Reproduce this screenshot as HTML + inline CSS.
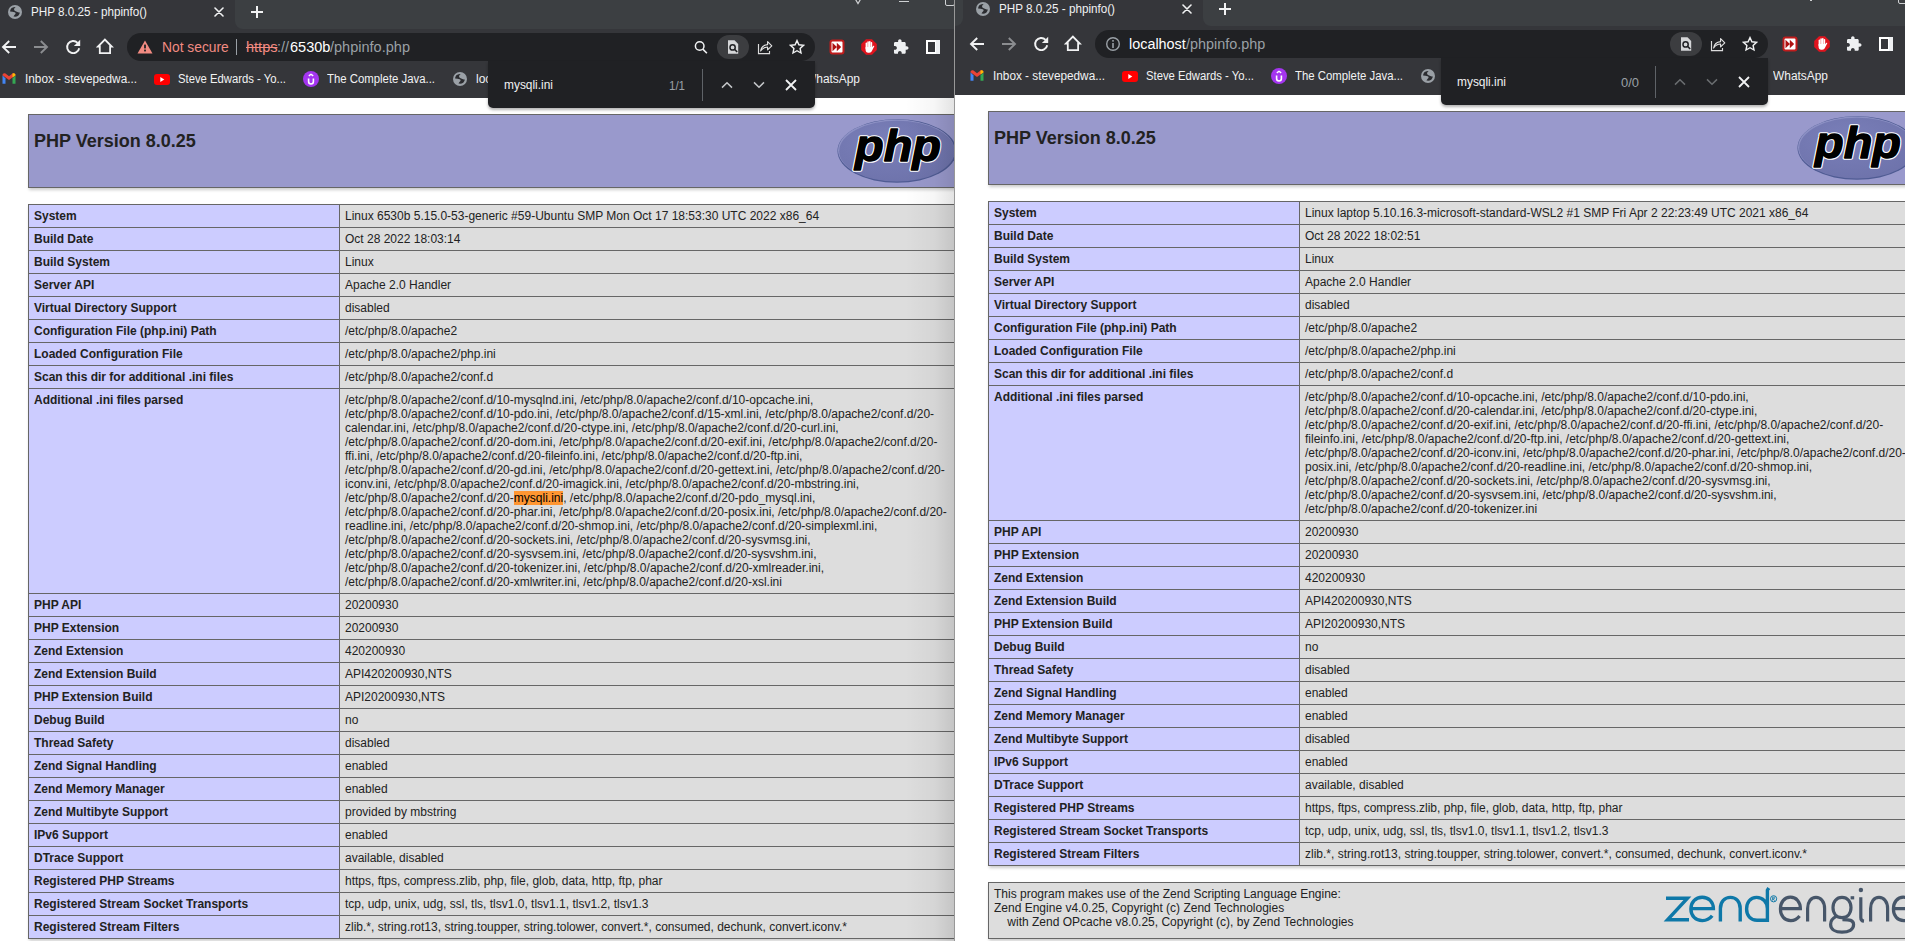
<!DOCTYPE html>
<html><head><meta charset="utf-8"><title>phpinfo</title><style>
*{box-sizing:content-box}
html,body{margin:0;padding:0;width:1905px;height:941px;overflow:hidden;background:#fff;font-family:"Liberation Sans",sans-serif}
.win{position:absolute;top:0;height:941px;overflow:hidden;background:#35363a}
.abs{position:absolute}
.strip{position:absolute;left:0;right:0;top:0;background:#3c3f42}
.tab{position:absolute;background:#35363a}
.toolbar{position:absolute;left:0;right:0;background:#35363a}
.omni{position:absolute;height:28px;border-radius:14px;background:#202124}
.txt{position:absolute;white-space:nowrap;color:#e8eaed;line-height:1}
.page{position:absolute;left:0;right:0;bottom:0;background:#fff;overflow:hidden;color:#222}
.center{padding-top:16px}
table.pi{border-collapse:collapse;border:0;width:934px;box-shadow:1px 2px 3px #ccc;margin:0 0 16px 0}
.pi td{border:1px solid #666;font-size:12px;line-height:14px;vertical-align:baseline;padding:4px 5px;white-space:nowrap}
.pi .e{background:#ccf;width:300px;font-weight:bold}
.pi .v{background:#ddd}
.pi tr.h td{background:#99c;font-weight:bold}
.pi h1{font-size:18px;margin:12px 0;line-height:21px}
.phplogo{float:right}
.hl{background:#ff9632;font-weight:normal;color:#000}
.findbar{position:absolute;width:327px;height:47px;background:#202124;border-radius:0 0 5px 5px;box-shadow:0 2px 3px rgba(0,0,0,.3)}
.zcell{height:47px}
.zlogo{float:right;width:260px;height:47px}
</style></head>
<body>
<div class="win" style="left:0px;width:954px"><div class="abs" style="left:0;top:0;width:954px;height:29px;background:#3c3f42"></div>
<div class="abs" style="left:-5px;top:0;width:240px;height:29px;background:#35363a;border-radius:0 0 0 0"></div>
<div class="abs" style="left:235px;top:21px;width:8px;height:8px;background:#35363a"><div style="width:8px;height:8px;background:#3c3f42;border-bottom-left-radius:8px"></div></div>
<div class="abs" style="left:235px;top:0px;width:8px;height:21px;background:#3c3f42"></div>
<div class="abs" style="left:0;top:29px;width:954px;height:69px;background:#35363a"></div>
<svg class="abs" style="left:7px;top:4px;" width="16" height="16" viewBox="0 0 16 16"><circle cx="8" cy="8" r="7" fill="#9aa0a6"/><path d="M3.1 7.6C3.2 5.8 4 4.4 5.2 3.8C6.2 3.3 7.4 3 8.6 3.1C7.6 4 7 4.8 7.1 5.7C7.3 6.8 8.6 7.2 10.4 7.9C11.4 8.3 12.2 8.4 12.8 8.6C12.6 10 12 11 11.2 11.8C10 12.6 8.2 12.8 6.5 12.5C6.8 11.6 7.6 10.8 8.4 10C8.8 9.4 8.6 8.6 7.6 8.2C6.4 7.8 4.8 7.6 3.1 7.6Z" fill="#2b2c30"/></svg>
<div class="txt" style="left:31px;top:5.84px;font-size:12px;height:12px;color:#f1f2f3;transform:scaleX(0.9733);transform-origin:0 0;">PHP 8.0.25 - phpinfo()</div>
<svg class="abs" style="left:214px;top:7px;" width="10" height="10" viewBox="0 0 10 10"><path d="M1 1L9 9M9 1L1 9" stroke="#f1f2f3" stroke-width="1.6" stroke-linecap="round"/></svg>
<svg class="abs" style="left:250px;top:5px;" width="14" height="14" viewBox="0 0 14 14"><path d="M7 1V13M1 7H13" stroke="#f1f2f3" stroke-width="2"/></svg>
<svg class="abs" style="left:852px;top:-5px;" width="14" height="10" viewBox="0 0 14 10"><path d="M1.5 1L6 8.6L10.5 1" stroke="#cfd1d3" stroke-width="1.2" fill="none"/></svg>
<div class="abs" style="left:899px;top:1px;width:10px;height:1px;background:#cfd1d3"></div>
<div class="abs" style="left:945px;top:-5px;width:8px;height:9px;border:1px solid #cfd1d3;border-radius:2px"></div>
<svg class="abs" style="left:1px;top:39px;" width="16" height="16" viewBox="0 0 16 16"><path d="M15 8H2.5M8.2 2L2 8L8.2 14" stroke="#f1f2f3" stroke-width="1.9" fill="none"/></svg>
<svg class="abs" style="left:33px;top:39px;" width="16" height="16" viewBox="0 0 16 16"><path d="M1 8H13.5M7.8 2L14 8L7.8 14" stroke="#8b8d90" stroke-width="1.9" fill="none"/></svg>
<svg class="abs" style="left:65px;top:39px;" width="16" height="16" viewBox="0 0 16 16"><path d="M14.2 9.2A6.1 6.1 0 1 1 12.6 3.8" stroke="#f1f2f3" stroke-width="1.9" fill="none"/><path d="M8.9 7.1H15.2V0.7Z" fill="#f1f2f3"/></svg>
<svg class="abs" style="left:96px;top:37.4px;" width="18" height="18" viewBox="0 0 18 18"><path d="M3.8 16.1V9.5H2L8.9 2.6L15.8 9.5H14.1V16.1Z" stroke="#f1f2f3" stroke-width="1.8" fill="none" stroke-linejoin="miter"/></svg>
<div class="omni" style="left:127px;top:33px;width:688px"></div>
<svg class="abs" style="left:137px;top:40px;" width="16" height="14" viewBox="0 0 16 14"><path d="M8 0.5L15.5 13.5H0.5Z" fill="#f28b82"/><rect x="7.1" y="4.6" width="1.8" height="3.8" fill="#202124"/><rect x="7.1" y="9.6" width="1.8" height="1.8" fill="#202124"/></svg>
<div class="txt" style="left:161.5px;top:40.15px;font-size:14px;height:14px;color:#f28b82;transform:scaleX(0.9867);transform-origin:0 0;">Not secure</div>
<div class="abs" style="left:236px;top:39px;width:1px;height:16px;background:#9aa0a6"></div>
<div class="txt" style="left:246px;top:40.15px;font-size:14px;height:14px;color:#f28b82;transform:scaleX(1.0378);transform-origin:0 0;text-decoration:line-through;">https</div>
<div class="txt" style="left:277.49982350131853px;top:40.15px;font-size:14px;height:14px;color:#9aa0a6;transform:scaleX(1.0378);transform-origin:0 0;">://</div>
<div class="txt" style="left:289.6093772711227px;top:40.15px;font-size:14px;height:14px;color:#fff;transform:scaleX(1.0378);transform-origin:0 0;">6530b</div>
<div class="txt" style="left:330.0142860109221px;top:40.15px;font-size:14px;height:14px;color:#9aa0a6;transform:scaleX(1.0378);transform-origin:0 0;">/phpinfo.php</div>
<svg class="abs" style="left:692px;top:39px;" width="16" height="16" viewBox="0 0 16 16"><circle cx="7.7" cy="7" r="4.3" stroke="#f1f2f3" stroke-width="1.5" fill="none"/><path d="M10.8 10.1L14.9 14.2" stroke="#f1f2f3" stroke-width="1.6"/></svg>
<div class="abs" style="left:717px;top:35px;width:32px;height:24px;border-radius:12px;background:#3c3d40"></div>
<svg class="abs" style="left:725px;top:39px;" width="16" height="16" viewBox="0 0 16 16"><path d="M3 1.2H9.5L13.2 4.9V14.8H3Z" fill="#d5d6d8"/><circle cx="7.6" cy="8.4" r="2.6" stroke="#202124" stroke-width="1.5" fill="none"/><path d="M9.5 10.3L12.2 13" stroke="#202124" stroke-width="1.6"/></svg>
<svg class="abs" style="left:757px;top:39px;" width="16" height="16" viewBox="0 0 16 16"><path d="M1.5 5V14.6H12.5V12" stroke="#dcdcdc" stroke-width="1.15" fill="none"/><path d="M3.6 12C4.2 8.4 6.6 6 10.6 5.6V2.6L14.8 6.8L10.6 10.8V8C7.6 8 5.4 9.4 3.6 12Z" stroke="#e6e6e6" stroke-width="1.1" fill="none" stroke-linejoin="round"/></svg>
<svg class="abs" style="left:789px;top:39px;" width="16" height="16" viewBox="0 0 16 16"><path d="M8 1.6L9.9 5.8L14.5 6.3L11.1 9.4L12 14L8 11.7L4 14L4.9 9.4L1.5 6.3L6.1 5.8Z" stroke="#f1f2f3" stroke-width="1.4" fill="none" stroke-linejoin="miter"/></svg>
<svg class="abs" style="left:829px;top:39px;" width="16" height="16" viewBox="0 0 16 16"><rect x="1.5" y="1.5" width="13" height="13" rx="2" fill="#fff" stroke="#c01c1c" stroke-width="2"/><path d="M3.5 3.7L7.9 8L3.5 12.3Z M7.8 3.7L12.2 8L7.8 12.3Z" fill="#b01212"/></svg>
<svg class="abs" style="left:861px;top:39px;" width="16" height="16" viewBox="0 0 16 16"><path d="M5 0.2H11L15.8 5V11L11 15.8H5L0.2 11V5Z" fill="#e0141e"/><g fill="#fff"><rect x="4.6" y="3.6" width="1.6" height="7" rx="0.8"/><rect x="6.3" y="2.2" width="1.6" height="8" rx="0.8"/><rect x="8" y="2" width="1.6" height="8" rx="0.8"/><rect x="9.7" y="3" width="1.5" height="7" rx="0.75"/><path d="M4.6 8H11.2L12.4 6.8C12.9 6.4 13.5 6.8 13.2 7.4L11 11.8C10.5 13 9.6 13.8 8.2 13.8H7.2C5.6 13.8 4.6 12.6 4.6 11Z"/></g></svg>
<svg class="abs" style="left:893px;top:39px;" width="16" height="16" viewBox="0 0 16 16"><path transform="translate(-0.4 -0.4) scale(0.69)" d="M20.5 11H19V7c0-1.1-.9-2-2-2h-4V3.5C13 2.12 11.88 1 10.5 1S8 2.12 8 3.5V5H4c-1.1 0-1.99.9-1.99 2v3.8H3.5c1.49 0 2.7 1.21 2.7 2.7s-1.21 2.7-2.7 2.7H2V20c0 1.1.9 2 2 2h3.8v-1.5c0-1.49 1.21-2.7 2.7-2.7 1.49 0 2.7 1.21 2.7 2.7V22H17c1.1 0 2-.9 2-2v-4h1.5c1.38 0 2.5-1.12 2.5-2.5S21.88 11 20.5 11z" fill="#eef0f2"/></svg>
<svg class="abs" style="left:925px;top:39px;" width="16" height="16" viewBox="0 0 16 16"><rect x="1" y="1" width="14" height="14" fill="#fff"/><rect x="3" y="3" width="7" height="10" fill="#35363a"/><rect x="11" y="1" width="4" height="14" fill="#eef0f2"/></svg>
<svg class="abs" style="left:1px;top:72px;" width="16" height="13" viewBox="0 0 16 13"><path d="M1.5 3.2V11.8H4.5V6.6Z" fill="#4285f4"/><path d="M11.5 6.6V11.8H14.5V3.2Z" fill="#34a853"/><path d="M1.5 3.2L8 8L14.5 3.2C14.5 1.4 12.8 0.6 11.5 1.6L8 4.2L4.5 1.6C3.2 0.6 1.5 1.4 1.5 3.2Z" fill="#ea4335"/><path d="M11.5 1.6C12.8 0.6 14.5 1.4 14.5 3.2L11.5 5.4Z" fill="#fbbc04"/></svg>
<div class="txt" style="left:25px;top:72.84px;font-size:12px;height:12px;color:#f1f2f3;transform:scaleX(0.9819);transform-origin:0 0;">Inbox - stevepedwa...</div>
<div class="abs" style="left:154px;top:73.5px;width:16px;height:11px;border-radius:3px;background:#f00"></div>
<svg class="abs" style="left:154px;top:73.5px;" width="16" height="11" viewBox="0 0 16 11"><path d="M6.3 3V8L10.3 5.5Z" fill="#fff"/></svg>
<div class="txt" style="left:178px;top:72.84px;font-size:12px;height:12px;color:#f1f2f3;transform:scaleX(0.9413);transform-origin:0 0;">Steve Edwards - Yo...</div>
<svg class="abs" style="left:303px;top:71px;" width="16" height="16" viewBox="0 0 16 16"><circle cx="8" cy="8" r="8" fill="#a435f0"/><path d="M5.6 7.6V10.6A2.4 2.4 0 0 0 10.4 10.6V7.6" stroke="#fff" stroke-width="1.6" fill="none"/><path d="M5.8 4.9L8 3.3L10.2 4.9" stroke="#fff" stroke-width="1.4" fill="none"/></svg>
<div class="txt" style="left:327px;top:72.84px;font-size:12px;height:12px;color:#f1f2f3;transform:scaleX(0.9469);transform-origin:0 0;">The Complete Java...</div>
<svg class="abs" style="left:452px;top:71px;" width="16" height="16" viewBox="0 0 16 16"><circle cx="8" cy="8" r="7" fill="#9aa0a6"/><path d="M3.1 7.6C3.2 5.8 4 4.4 5.2 3.8C6.2 3.3 7.4 3 8.6 3.1C7.6 4 7 4.8 7.1 5.7C7.3 6.8 8.6 7.2 10.4 7.9C11.4 8.3 12.2 8.4 12.8 8.6C12.6 10 12 11 11.2 11.8C10 12.6 8.2 12.8 6.5 12.5C6.8 11.6 7.6 10.8 8.4 10C8.8 9.4 8.6 8.6 7.6 8.2C6.4 7.8 4.8 7.6 3.1 7.6Z" fill="#2b2c30"/></svg>
<div class="txt" style="left:476px;top:72.84px;font-size:12px;height:12px;color:#f1f2f3;">localhost</div>
<div class="txt" style="left:804.5px;top:72.84px;font-size:12px;height:12px;color:#f1f2f3;transform:scaleX(0.9935);transform-origin:0 0;">WhatsApp</div><div class="page" style="top:98px"><div class="center" style="padding-left:28px">
<table class="pi"><tr class="h"><td><svg class="phplogo" width="120" height="64" viewBox="0 0 120 64">
<defs><radialGradient id="pg" cx="0.4" cy="0.35" r="0.75"><stop offset="0" stop-color="#7a7fb9"/><stop offset="1" stop-color="#6d72aa"/></radialGradient></defs>
<ellipse cx="60" cy="32" rx="59.5" ry="31.8" fill="#4f5b93"/>
<ellipse cx="59.2" cy="31.2" rx="58.2" ry="30.6" fill="#8c90c4"/>
<ellipse cx="60" cy="32.2" rx="57.8" ry="30.4" fill="url(#pg)"/>
<text x="18" y="41.5" font-family="Liberation Sans" font-weight="bold" font-style="italic" font-size="45" fill="#000" stroke="#fff" stroke-width="3.6" stroke-linejoin="round" paint-order="stroke" textLength="86" lengthAdjust="spacingAndGlyphs">php</text>
<text x="18" y="41.5" font-family="Liberation Sans" font-weight="bold" font-style="italic" font-size="45" fill="#000" stroke="#000" stroke-width="1.3" stroke-linejoin="round" textLength="86" lengthAdjust="spacingAndGlyphs">php</text>
</svg><h1 class="p">PHP Version 8.0.25</h1></td></tr></table>
<table class="pi">
<tr><td class="e">System</td><td class="v">Linux 6530b 5.15.0-53-generic #59-Ubuntu SMP Mon Oct 17 18:53:30 UTC 2022 x86_64</td></tr>
<tr><td class="e">Build Date</td><td class="v">Oct 28 2022 18:03:14</td></tr>
<tr><td class="e">Build System</td><td class="v">Linux</td></tr>
<tr><td class="e">Server API</td><td class="v">Apache 2.0 Handler</td></tr>
<tr><td class="e">Virtual Directory Support</td><td class="v">disabled</td></tr>
<tr><td class="e">Configuration File (php.ini) Path</td><td class="v">/etc/php/8.0/apache2</td></tr>
<tr><td class="e">Loaded Configuration File</td><td class="v">/etc/php/8.0/apache2/php.ini</td></tr>
<tr><td class="e">Scan this dir for additional .ini files</td><td class="v">/etc/php/8.0/apache2/conf.d</td></tr>
<tr><td class="e">Additional .ini files parsed</td><td class="v">/etc/php/8.0/apache2/conf.d/10-mysqlnd.ini, /etc/php/8.0/apache2/conf.d/10-opcache.ini,<br>/etc/php/8.0/apache2/conf.d/10-pdo.ini, /etc/php/8.0/apache2/conf.d/15-xml.ini, /etc/php/8.0/apache2/conf.d/20-<br>calendar.ini, /etc/php/8.0/apache2/conf.d/20-ctype.ini, /etc/php/8.0/apache2/conf.d/20-curl.ini,<br>/etc/php/8.0/apache2/conf.d/20-dom.ini, /etc/php/8.0/apache2/conf.d/20-exif.ini, /etc/php/8.0/apache2/conf.d/20-<br>ffi.ini, /etc/php/8.0/apache2/conf.d/20-fileinfo.ini, /etc/php/8.0/apache2/conf.d/20-ftp.ini,<br>/etc/php/8.0/apache2/conf.d/20-gd.ini, /etc/php/8.0/apache2/conf.d/20-gettext.ini, /etc/php/8.0/apache2/conf.d/20-<br>iconv.ini, /etc/php/8.0/apache2/conf.d/20-imagick.ini, /etc/php/8.0/apache2/conf.d/20-mbstring.ini,<br>/etc/php/8.0/apache2/conf.d/20-<b class=hl>mysqli.ini</b>, /etc/php/8.0/apache2/conf.d/20-pdo_mysql.ini,<br>/etc/php/8.0/apache2/conf.d/20-phar.ini, /etc/php/8.0/apache2/conf.d/20-posix.ini, /etc/php/8.0/apache2/conf.d/20-<br>readline.ini, /etc/php/8.0/apache2/conf.d/20-shmop.ini, /etc/php/8.0/apache2/conf.d/20-simplexml.ini,<br>/etc/php/8.0/apache2/conf.d/20-sockets.ini, /etc/php/8.0/apache2/conf.d/20-sysvmsg.ini,<br>/etc/php/8.0/apache2/conf.d/20-sysvsem.ini, /etc/php/8.0/apache2/conf.d/20-sysvshm.ini,<br>/etc/php/8.0/apache2/conf.d/20-tokenizer.ini, /etc/php/8.0/apache2/conf.d/20-xmlreader.ini,<br>/etc/php/8.0/apache2/conf.d/20-xmlwriter.ini, /etc/php/8.0/apache2/conf.d/20-xsl.ini</td></tr>
<tr><td class="e">PHP API</td><td class="v">20200930</td></tr>
<tr><td class="e">PHP Extension</td><td class="v">20200930</td></tr>
<tr><td class="e">Zend Extension</td><td class="v">420200930</td></tr>
<tr><td class="e">Zend Extension Build</td><td class="v">API420200930,NTS</td></tr>
<tr><td class="e">PHP Extension Build</td><td class="v">API20200930,NTS</td></tr>
<tr><td class="e">Debug Build</td><td class="v">no</td></tr>
<tr><td class="e">Thread Safety</td><td class="v">disabled</td></tr>
<tr><td class="e">Zend Signal Handling</td><td class="v">enabled</td></tr>
<tr><td class="e">Zend Memory Manager</td><td class="v">enabled</td></tr>
<tr><td class="e">Zend Multibyte Support</td><td class="v">provided by mbstring</td></tr>
<tr><td class="e">IPv6 Support</td><td class="v">enabled</td></tr>
<tr><td class="e">DTrace Support</td><td class="v">available, disabled</td></tr>
<tr><td class="e">Registered PHP Streams</td><td class="v">https, ftps, compress.zlib, php, file, glob, data, http, ftp, phar</td></tr>
<tr><td class="e">Registered Stream Socket Transports</td><td class="v">tcp, udp, unix, udg, ssl, tls, tlsv1.0, tlsv1.1, tlsv1.2, tlsv1.3</td></tr>
<tr><td class="e">Registered Stream Filters</td><td class="v">zlib.*, string.rot13, string.toupper, string.tolower, convert.*, consumed, dechunk, convert.iconv.*</td></tr>
</table>

</div></div><div class="findbar" style="left:488px;top:61px"></div>
<div class="txt" style="left:504px;top:78.00px;font-size:13px;height:13px;color:#f1f2f3;transform:scaleX(0.9167);transform-origin:0 0;">mysqli.ini</div>
<div class="txt" style="left:669px;top:78.50px;font-size:13px;height:13px;color:#9aa0a6;transform:scaleX(0.8853);transform-origin:0 0;">1/1</div>
<div class="abs" style="left:702px;top:69px;width:1px;height:32px;background:#5f6368"></div>
<svg class="abs" style="left:719px;top:79px;" width="16" height="12" viewBox="0 0 16 12"><path d="M3 8.6L8 3.8L13 8.6" stroke="#c4c6c9" stroke-width="1.5" fill="none"/></svg>
<svg class="abs" style="left:751px;top:79px;" width="16" height="12" viewBox="0 0 16 12"><path d="M3 3.4L8 8.2L13 3.4" stroke="#c4c6c9" stroke-width="1.5" fill="none"/></svg>
<svg class="abs" style="left:783px;top:77px;" width="16" height="16" viewBox="0 0 16 16"><path d="M3 3L13 13M13 3L3 13" stroke="#f1f2f3" stroke-width="1.8"/></svg></div>
<div class="abs" style="left:905px;top:98px;width:49px;height:843px;background:linear-gradient(to right,rgba(0,0,0,0),rgba(0,0,0,0.035) 60%,rgba(0,0,0,0.11))"></div>
<div class="abs" style="left:954px;top:0;width:1px;height:941px;background:#989898"></div>
<div class="win" style="left:955px;width:950px"><div class="abs" style="left:0;top:0;width:950px;height:26px;background:#3c3f42"></div>
<div class="abs" style="left:0;top:0;width:8px;height:26px;background:#3c3f42"></div>
<div class="abs" style="left:8px;top:0;width:240px;height:26px;background:#35363a;border-radius:0 0 0 0"></div>
<div class="abs" style="left:248px;top:18px;width:8px;height:8px;background:#35363a"><div style="width:8px;height:8px;background:#3c3f42;border-bottom-left-radius:8px"></div></div>
<div class="abs" style="left:248px;top:0px;width:8px;height:18px;background:#3c3f42"></div>
<div class="abs" style="left:0px;top:18px;width:8px;height:8px;background:#35363a"><div style="width:8px;height:8px;background:#3c3f42;border-bottom-right-radius:8px"></div></div>
<div class="abs" style="left:0;top:26px;width:950px;height:69px;background:#35363a"></div>
<svg class="abs" style="left:20px;top:1px;" width="16" height="16" viewBox="0 0 16 16"><circle cx="8" cy="8" r="7" fill="#9aa0a6"/><path d="M3.1 7.6C3.2 5.8 4 4.4 5.2 3.8C6.2 3.3 7.4 3 8.6 3.1C7.6 4 7 4.8 7.1 5.7C7.3 6.8 8.6 7.2 10.4 7.9C11.4 8.3 12.2 8.4 12.8 8.6C12.6 10 12 11 11.2 11.8C10 12.6 8.2 12.8 6.5 12.5C6.8 11.6 7.6 10.8 8.4 10C8.8 9.4 8.6 8.6 7.6 8.2C6.4 7.8 4.8 7.6 3.1 7.6Z" fill="#2b2c30"/></svg>
<div class="txt" style="left:44px;top:2.84px;font-size:12px;height:12px;color:#f1f2f3;transform:scaleX(0.9733);transform-origin:0 0;">PHP 8.0.25 - phpinfo()</div>
<svg class="abs" style="left:227px;top:4px;" width="10" height="10" viewBox="0 0 10 10"><path d="M1 1L9 9M9 1L1 9" stroke="#f1f2f3" stroke-width="1.6" stroke-linecap="round"/></svg>
<svg class="abs" style="left:263px;top:2px;" width="14" height="14" viewBox="0 0 14 14"><path d="M7 1V13M1 7H13" stroke="#f1f2f3" stroke-width="2"/></svg>
<div class="abs" style="left:855px;top:0px;width:2px;height:1px;background:#cfd1d3"></div>
<div class="abs" style="left:943px;top:-6px;width:10px;height:8px;border:1px solid #cfd1d3;border-radius:2px"></div>
<svg class="abs" style="left:14px;top:36px;" width="16" height="16" viewBox="0 0 16 16"><path d="M15 8H2.5M8.2 2L2 8L8.2 14" stroke="#f1f2f3" stroke-width="1.9" fill="none"/></svg>
<svg class="abs" style="left:46px;top:36px;" width="16" height="16" viewBox="0 0 16 16"><path d="M1 8H13.5M7.8 2L14 8L7.8 14" stroke="#8b8d90" stroke-width="1.9" fill="none"/></svg>
<svg class="abs" style="left:78px;top:36px;" width="16" height="16" viewBox="0 0 16 16"><path d="M14.2 9.2A6.1 6.1 0 1 1 12.6 3.8" stroke="#f1f2f3" stroke-width="1.9" fill="none"/><path d="M8.9 7.1H15.2V0.7Z" fill="#f1f2f3"/></svg>
<svg class="abs" style="left:109px;top:34.4px;" width="18" height="18" viewBox="0 0 18 18"><path d="M3.8 16.1V9.5H2L8.9 2.6L15.8 9.5H14.1V16.1Z" stroke="#f1f2f3" stroke-width="1.8" fill="none" stroke-linejoin="miter"/></svg>
<div class="omni" style="left:140px;top:30px;width:673px"></div>
<svg class="abs" style="left:149.5px;top:36px;" width="16" height="16" viewBox="0 0 16 16"><circle cx="8" cy="8" r="6.3" stroke="#9aa0a6" stroke-width="1.4" fill="none"/><rect x="7.2" y="7" width="1.6" height="5" fill="#9aa0a6"/><rect x="7.2" y="4" width="1.6" height="1.7" fill="#9aa0a6"/></svg>
<div class="txt" style="left:174px;top:37.15px;font-size:14px;height:14px;color:#fff;transform:scaleX(1.0278);transform-origin:0 0;">localhost</div>
<div class="txt" style="left:230.7903193810752px;top:37.15px;font-size:14px;height:14px;color:#9aa0a6;transform:scaleX(1.0278);transform-origin:0 0;">/phpinfo.php</div>
<div class="abs" style="left:715px;top:32px;width:32px;height:24px;border-radius:12px;background:#3c3d40"></div>
<svg class="abs" style="left:723px;top:36px;" width="16" height="16" viewBox="0 0 16 16"><path d="M3 1.2H9.5L13.2 4.9V14.8H3Z" fill="#d5d6d8"/><circle cx="7.6" cy="8.4" r="2.6" stroke="#202124" stroke-width="1.5" fill="none"/><path d="M9.5 10.3L12.2 13" stroke="#202124" stroke-width="1.6"/></svg>
<svg class="abs" style="left:755px;top:36px;" width="16" height="16" viewBox="0 0 16 16"><path d="M1.5 5V14.6H12.5V12" stroke="#dcdcdc" stroke-width="1.15" fill="none"/><path d="M3.6 12C4.2 8.4 6.6 6 10.6 5.6V2.6L14.8 6.8L10.6 10.8V8C7.6 8 5.4 9.4 3.6 12Z" stroke="#e6e6e6" stroke-width="1.1" fill="none" stroke-linejoin="round"/></svg>
<svg class="abs" style="left:787px;top:36px;" width="16" height="16" viewBox="0 0 16 16"><path d="M8 1.6L9.9 5.8L14.5 6.3L11.1 9.4L12 14L8 11.7L4 14L4.9 9.4L1.5 6.3L6.1 5.8Z" stroke="#f1f2f3" stroke-width="1.4" fill="none" stroke-linejoin="miter"/></svg>
<svg class="abs" style="left:827px;top:36px;" width="16" height="16" viewBox="0 0 16 16"><rect x="1.5" y="1.5" width="13" height="13" rx="2" fill="#fff" stroke="#c01c1c" stroke-width="2"/><path d="M3.5 3.7L7.9 8L3.5 12.3Z M7.8 3.7L12.2 8L7.8 12.3Z" fill="#b01212"/></svg>
<svg class="abs" style="left:859px;top:36px;" width="16" height="16" viewBox="0 0 16 16"><path d="M5 0.2H11L15.8 5V11L11 15.8H5L0.2 11V5Z" fill="#e0141e"/><g fill="#fff"><rect x="4.6" y="3.6" width="1.6" height="7" rx="0.8"/><rect x="6.3" y="2.2" width="1.6" height="8" rx="0.8"/><rect x="8" y="2" width="1.6" height="8" rx="0.8"/><rect x="9.7" y="3" width="1.5" height="7" rx="0.75"/><path d="M4.6 8H11.2L12.4 6.8C12.9 6.4 13.5 6.8 13.2 7.4L11 11.8C10.5 13 9.6 13.8 8.2 13.8H7.2C5.6 13.8 4.6 12.6 4.6 11Z"/></g></svg>
<svg class="abs" style="left:891px;top:36px;" width="16" height="16" viewBox="0 0 16 16"><path transform="translate(-0.4 -0.4) scale(0.69)" d="M20.5 11H19V7c0-1.1-.9-2-2-2h-4V3.5C13 2.12 11.88 1 10.5 1S8 2.12 8 3.5V5H4c-1.1 0-1.99.9-1.99 2v3.8H3.5c1.49 0 2.7 1.21 2.7 2.7s-1.21 2.7-2.7 2.7H2V20c0 1.1.9 2 2 2h3.8v-1.5c0-1.49 1.21-2.7 2.7-2.7 1.49 0 2.7 1.21 2.7 2.7V22H17c1.1 0 2-.9 2-2v-4h1.5c1.38 0 2.5-1.12 2.5-2.5S21.88 11 20.5 11z" fill="#eef0f2"/></svg>
<svg class="abs" style="left:923px;top:36px;" width="16" height="16" viewBox="0 0 16 16"><rect x="1" y="1" width="14" height="14" fill="#fff"/><rect x="3" y="3" width="7" height="10" fill="#35363a"/><rect x="11" y="1" width="4" height="14" fill="#eef0f2"/></svg>
<svg class="abs" style="left:14px;top:69px;" width="16" height="13" viewBox="0 0 16 13"><path d="M1.5 3.2V11.8H4.5V6.6Z" fill="#4285f4"/><path d="M11.5 6.6V11.8H14.5V3.2Z" fill="#34a853"/><path d="M1.5 3.2L8 8L14.5 3.2C14.5 1.4 12.8 0.6 11.5 1.6L8 4.2L4.5 1.6C3.2 0.6 1.5 1.4 1.5 3.2Z" fill="#ea4335"/><path d="M11.5 1.6C12.8 0.6 14.5 1.4 14.5 3.2L11.5 5.4Z" fill="#fbbc04"/></svg>
<div class="txt" style="left:38px;top:69.84px;font-size:12px;height:12px;color:#f1f2f3;transform:scaleX(0.9819);transform-origin:0 0;">Inbox - stevepedwa...</div>
<div class="abs" style="left:167px;top:70.5px;width:16px;height:11px;border-radius:3px;background:#f00"></div>
<svg class="abs" style="left:167px;top:70.5px;" width="16" height="11" viewBox="0 0 16 11"><path d="M6.3 3V8L10.3 5.5Z" fill="#fff"/></svg>
<div class="txt" style="left:191px;top:69.84px;font-size:12px;height:12px;color:#f1f2f3;transform:scaleX(0.9413);transform-origin:0 0;">Steve Edwards - Yo...</div>
<svg class="abs" style="left:316px;top:68px;" width="16" height="16" viewBox="0 0 16 16"><circle cx="8" cy="8" r="8" fill="#a435f0"/><path d="M5.6 7.6V10.6A2.4 2.4 0 0 0 10.4 10.6V7.6" stroke="#fff" stroke-width="1.6" fill="none"/><path d="M5.8 4.9L8 3.3L10.2 4.9" stroke="#fff" stroke-width="1.4" fill="none"/></svg>
<div class="txt" style="left:340px;top:69.84px;font-size:12px;height:12px;color:#f1f2f3;transform:scaleX(0.9469);transform-origin:0 0;">The Complete Java...</div>
<svg class="abs" style="left:465px;top:68px;" width="16" height="16" viewBox="0 0 16 16"><circle cx="8" cy="8" r="7" fill="#9aa0a6"/><path d="M3.1 7.6C3.2 5.8 4 4.4 5.2 3.8C6.2 3.3 7.4 3 8.6 3.1C7.6 4 7 4.8 7.1 5.7C7.3 6.8 8.6 7.2 10.4 7.9C11.4 8.3 12.2 8.4 12.8 8.6C12.6 10 12 11 11.2 11.8C10 12.6 8.2 12.8 6.5 12.5C6.8 11.6 7.6 10.8 8.4 10C8.8 9.4 8.6 8.6 7.6 8.2C6.4 7.8 4.8 7.6 3.1 7.6Z" fill="#2b2c30"/></svg>
<div class="txt" style="left:489px;top:69.84px;font-size:12px;height:12px;color:#f1f2f3;">localhost</div>
<div class="txt" style="left:817.5px;top:69.84px;font-size:12px;height:12px;color:#f1f2f3;transform:scaleX(0.9935);transform-origin:0 0;">WhatsApp</div><div class="page" style="top:95px"><div class="center" style="padding-left:33px">
<table class="pi"><tr class="h"><td><svg class="phplogo" width="120" height="64" viewBox="0 0 120 64">
<defs><radialGradient id="pg" cx="0.4" cy="0.35" r="0.75"><stop offset="0" stop-color="#7a7fb9"/><stop offset="1" stop-color="#6d72aa"/></radialGradient></defs>
<ellipse cx="60" cy="32" rx="59.5" ry="31.8" fill="#4f5b93"/>
<ellipse cx="59.2" cy="31.2" rx="58.2" ry="30.6" fill="#8c90c4"/>
<ellipse cx="60" cy="32.2" rx="57.8" ry="30.4" fill="url(#pg)"/>
<text x="18" y="41.5" font-family="Liberation Sans" font-weight="bold" font-style="italic" font-size="45" fill="#000" stroke="#fff" stroke-width="3.6" stroke-linejoin="round" paint-order="stroke" textLength="86" lengthAdjust="spacingAndGlyphs">php</text>
<text x="18" y="41.5" font-family="Liberation Sans" font-weight="bold" font-style="italic" font-size="45" fill="#000" stroke="#000" stroke-width="1.3" stroke-linejoin="round" textLength="86" lengthAdjust="spacingAndGlyphs">php</text>
</svg><h1 class="p">PHP Version 8.0.25</h1></td></tr></table>
<table class="pi">
<tr><td class="e">System</td><td class="v">Linux laptop 5.10.16.3-microsoft-standard-WSL2 #1 SMP Fri Apr 2 22:23:49 UTC 2021 x86_64</td></tr>
<tr><td class="e">Build Date</td><td class="v">Oct 28 2022 18:02:51</td></tr>
<tr><td class="e">Build System</td><td class="v">Linux</td></tr>
<tr><td class="e">Server API</td><td class="v">Apache 2.0 Handler</td></tr>
<tr><td class="e">Virtual Directory Support</td><td class="v">disabled</td></tr>
<tr><td class="e">Configuration File (php.ini) Path</td><td class="v">/etc/php/8.0/apache2</td></tr>
<tr><td class="e">Loaded Configuration File</td><td class="v">/etc/php/8.0/apache2/php.ini</td></tr>
<tr><td class="e">Scan this dir for additional .ini files</td><td class="v">/etc/php/8.0/apache2/conf.d</td></tr>
<tr><td class="e">Additional .ini files parsed</td><td class="v">/etc/php/8.0/apache2/conf.d/10-opcache.ini, /etc/php/8.0/apache2/conf.d/10-pdo.ini,<br>/etc/php/8.0/apache2/conf.d/20-calendar.ini, /etc/php/8.0/apache2/conf.d/20-ctype.ini,<br>/etc/php/8.0/apache2/conf.d/20-exif.ini, /etc/php/8.0/apache2/conf.d/20-ffi.ini, /etc/php/8.0/apache2/conf.d/20-<br>fileinfo.ini, /etc/php/8.0/apache2/conf.d/20-ftp.ini, /etc/php/8.0/apache2/conf.d/20-gettext.ini,<br>/etc/php/8.0/apache2/conf.d/20-iconv.ini, /etc/php/8.0/apache2/conf.d/20-phar.ini, /etc/php/8.0/apache2/conf.d/20-<br>posix.ini, /etc/php/8.0/apache2/conf.d/20-readline.ini, /etc/php/8.0/apache2/conf.d/20-shmop.ini,<br>/etc/php/8.0/apache2/conf.d/20-sockets.ini, /etc/php/8.0/apache2/conf.d/20-sysvmsg.ini,<br>/etc/php/8.0/apache2/conf.d/20-sysvsem.ini, /etc/php/8.0/apache2/conf.d/20-sysvshm.ini,<br>/etc/php/8.0/apache2/conf.d/20-tokenizer.ini</td></tr>
<tr><td class="e">PHP API</td><td class="v">20200930</td></tr>
<tr><td class="e">PHP Extension</td><td class="v">20200930</td></tr>
<tr><td class="e">Zend Extension</td><td class="v">420200930</td></tr>
<tr><td class="e">Zend Extension Build</td><td class="v">API420200930,NTS</td></tr>
<tr><td class="e">PHP Extension Build</td><td class="v">API20200930,NTS</td></tr>
<tr><td class="e">Debug Build</td><td class="v">no</td></tr>
<tr><td class="e">Thread Safety</td><td class="v">disabled</td></tr>
<tr><td class="e">Zend Signal Handling</td><td class="v">enabled</td></tr>
<tr><td class="e">Zend Memory Manager</td><td class="v">enabled</td></tr>
<tr><td class="e">Zend Multibyte Support</td><td class="v">disabled</td></tr>
<tr><td class="e">IPv6 Support</td><td class="v">enabled</td></tr>
<tr><td class="e">DTrace Support</td><td class="v">available, disabled</td></tr>
<tr><td class="e">Registered PHP Streams</td><td class="v">https, ftps, compress.zlib, php, file, glob, data, http, ftp, phar</td></tr>
<tr><td class="e">Registered Stream Socket Transports</td><td class="v">tcp, udp, unix, udg, ssl, tls, tlsv1.0, tlsv1.1, tlsv1.2, tlsv1.3</td></tr>
<tr><td class="e">Registered Stream Filters</td><td class="v">zlib.*, string.rot13, string.toupper, string.tolower, convert.*, consumed, dechunk, convert.iconv.*</td></tr>
</table>
<table class="pi zt"><tr class="v"><td class="v zcell"><div class="zlogo"></div>This program makes use of the Zend Scripting Language Engine:<br>Zend&nbsp;Engine&nbsp;v4.0.25,&nbsp;Copyright&nbsp;(c)&nbsp;Zend&nbsp;Technologies<br>&nbsp;&nbsp;&nbsp;&nbsp;with&nbsp;Zend&nbsp;OPcache&nbsp;v8.0.25,&nbsp;Copyright&nbsp;(c),&nbsp;by&nbsp;Zend&nbsp;Technologies</td></tr></table>
</div></div><svg class="abs" style="left:695px;top:880px" width="270" height="60" viewBox="1650 880 270 60"><path d="M1666 898.2H1687.5L1667.5 919.8H1689" stroke="#0e78a8" stroke-width="3.4" fill="none" stroke-linejoin="miter"/><path d="M1691.2 908.6H1713.4C1713.4 902 1708.6 897.2 1702.2 897.2C1695.4 897.2 1690.9 902.4 1690.9 909C1690.9 915.8 1695.6 920.6 1702.4 920.6C1706.6 920.6 1709.8 918.8 1712.2 915.8" stroke="#0e78a8" stroke-width="3.4" fill="none"/><path d="M1720.4 921.5V908.4C1720.4 901.8 1724.6 897.4 1730.4 897.4C1736.2 897.4 1740.2 901.8 1740.2 908.4V921.5" stroke="#0e78a8" stroke-width="3.4" fill="none"/><path d="M1767.4 908.8C1767.4 902.2 1762.8 897.4 1756.6 897.4C1750.2 897.4 1746.6 902.6 1746.6 909C1746.6 915.6 1750.6 920.2 1757 920.2H1767.4V890.2L1768.8 888" stroke="#0e78a8" stroke-width="3.4" fill="none"/><circle cx="1773.6" cy="898.8" r="3.1" stroke="#0e78a8" stroke-width="1" fill="none"/><path d="M1772.6 900.6V897.2H1774.2C1775 897.2 1775 898.8 1774.2 898.8H1772.6L1774.8 900.6" stroke="#0e78a8" stroke-width="0.8" fill="none"/><path d="M1780.6 908.6H1800.4C1800.4 902 1796.4 897.2 1790.4 897.2C1784.2 897.2 1780.4 902.4 1780.4 909C1780.4 915.8 1784.6 920.6 1790.8 920.6C1794.6 920.6 1797.4 918.8 1799.6 916" stroke="#475669" stroke-width="3.2" fill="none"/><path d="M1807.6 921.5V908.4C1807.6 901.8 1811 897.4 1816 897.4C1821 897.4 1824.6 901.8 1824.6 908.4V921.5" stroke="#475669" stroke-width="3.2" fill="none"/><path d="M1842 897.4C1847.4 897.4 1851 901.6 1851 907.6C1851 913.6 1847.4 917.6 1842 917.6C1836.6 917.6 1833 913.6 1833 907.6C1833 901.6 1836.6 897.4 1842 897.4Z" stroke="#475669" stroke-width="3.2" fill="none"/><path d="M1850.6 897.8H1854.2" stroke="#475669" stroke-width="3.2" fill="none"/><path d="M1836.4 916.4C1832 918.4 1830.6 921 1830.6 924.4C1830.6 929.6 1835.6 932.2 1842 932.2C1848.6 932.2 1853.6 929.6 1853.6 924.6C1853.6 920 1849.6 919.6 1842.4 919.6" stroke="#475669" stroke-width="3.2" fill="none"/><path d="M1860.8 897.2V917.4C1860.8 920 1862 921 1864 921.2" stroke="#475669" stroke-width="3.2" fill="none"/><circle cx="1860.9" cy="890" r="2.2" fill="#475669"/><path d="M1870.6 921.5V908.4C1870.6 901.8 1874 897.4 1879 897.4C1884 897.4 1887.6 901.8 1887.6 908.4V921.5" stroke="#475669" stroke-width="3.2" fill="none"/><path d="M1893.6 908.6H1913.4C1913.4 902 1909.4 897.2 1903.4 897.2C1897.2 897.2 1893.4 902.4 1893.4 909C1893.4 915.8 1897.6 920.6 1903.8 920.6C1907.6 920.6 1910.4 918.8 1912.6 916" stroke="#475669" stroke-width="3.2" fill="none"/></svg><div class="findbar" style="left:486px;top:58px"></div>
<div class="txt" style="left:502px;top:75.00px;font-size:13px;height:13px;color:#f1f2f3;transform:scaleX(0.9167);transform-origin:0 0;">mysqli.ini</div>
<div class="txt" style="left:666px;top:75.50px;font-size:13px;height:13px;color:#9aa0a6;transform:scaleX(0.9960);transform-origin:0 0;">0/0</div>
<div class="abs" style="left:700px;top:66px;width:1px;height:32px;background:#5f6368"></div>
<svg class="abs" style="left:717px;top:76px;" width="16" height="12" viewBox="0 0 16 12"><path d="M3 8.6L8 3.8L13 8.6" stroke="#6a6d70" stroke-width="1.5" fill="none"/></svg>
<svg class="abs" style="left:749px;top:76px;" width="16" height="12" viewBox="0 0 16 12"><path d="M3 3.4L8 8.2L13 3.4" stroke="#6a6d70" stroke-width="1.5" fill="none"/></svg>
<svg class="abs" style="left:781px;top:74px;" width="16" height="16" viewBox="0 0 16 16"><path d="M3 3L13 13M13 3L3 13" stroke="#f1f2f3" stroke-width="1.8"/></svg></div>
</body></html>
